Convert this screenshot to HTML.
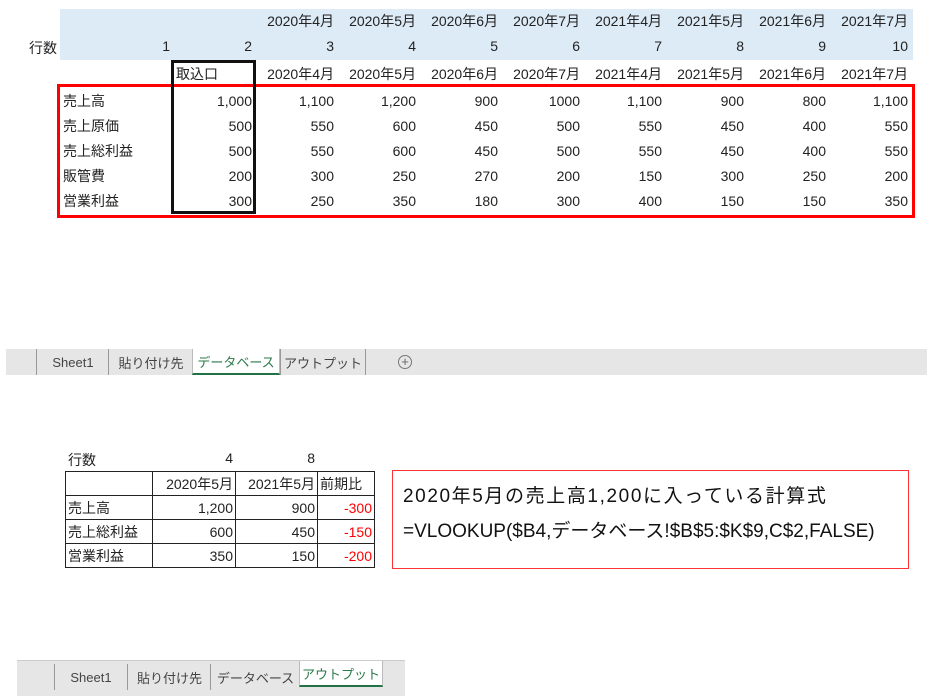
<!DOCTYPE html>
<html><head><meta charset="utf-8"><style>
body{margin:0;width:937px;height:695px;background:#fff;position:relative;overflow:hidden;font-family:"Liberation Sans","Noto Sans CJK JP",sans-serif;color:#222}
.a{position:absolute}
table{border-collapse:collapse;position:absolute;font-size:14px;table-layout:fixed}
#t1 td{height:25px;padding:0 2px 0 0;text-align:right;width:80px;white-space:nowrap;line-height:25px;overflow:visible}
#t1 td.l{text-align:left;padding-left:5px;width:107px}
#t2 td{border:1.5px solid #222;height:23px;padding:0 2px;text-align:right;white-space:nowrap;font-size:14px}
#t2 td.l{text-align:left}
.r{color:#f00}
.bar{position:absolute;background:#e6e6e6;font-size:13px;color:#444}
.tab{position:absolute;top:0;height:100%;display:flex;align-items:center;justify-content:center;border-left:1px solid #999;white-space:nowrap}
.act{background:#fff;color:#2a7a4a;border-bottom:2px solid #217346;box-sizing:border-box;border-left:1px solid #bbb;border-right:1px solid #bbb}
</style></head><body>
<div class="a" style="left:60px;top:9px;width:853px;height:51px;background:#ddebf7"></div>
<div class="a" style="left:29px;top:38px;font-size:14px">行数</div>
<table id="t1" style="left:58px;top:9px;width:852px">
<colgroup><col style="width:114px"><col span="9" style="width:82px"></colgroup>
<tr><td class="l"></td><td></td><td>2020年4月</td><td>2020年5月</td><td>2020年6月</td><td>2020年7月</td><td>2021年4月</td><td>2021年5月</td><td>2021年6月</td><td>2021年7月</td></tr>
<tr><td class="l" style="text-align:right;padding-right:2px">1</td><td>2</td><td>3</td><td>4</td><td>5</td><td>6</td><td>7</td><td>8</td><td>9</td><td>10</td></tr>
<tr style="height:28px"><td class="l" style="height:28px;line-height:30px"></td><td style="text-align:left;padding-left:4px;height:28px;line-height:30px">取込口</td><td style="height:28px;line-height:30px">2020年4月</td><td style="line-height:30px">2020年5月</td><td style="line-height:30px">2020年6月</td><td style="line-height:30px">2020年7月</td><td style="line-height:30px">2021年4月</td><td style="line-height:30px">2021年5月</td><td style="line-height:30px">2021年6月</td><td style="line-height:30px">2021年7月</td></tr>
<tr><td class="l">売上高</td><td>1,000</td><td>1,100</td><td>1,200</td><td>900</td><td>1000</td><td>1,100</td><td>900</td><td>800</td><td>1,100</td></tr>
<tr><td class="l">売上原価</td><td>500</td><td>550</td><td>600</td><td>450</td><td>500</td><td>550</td><td>450</td><td>400</td><td>550</td></tr>
<tr><td class="l">売上総利益</td><td>500</td><td>550</td><td>600</td><td>450</td><td>500</td><td>550</td><td>450</td><td>400</td><td>550</td></tr>
<tr><td class="l">販管費</td><td>200</td><td>300</td><td>250</td><td>270</td><td>200</td><td>150</td><td>300</td><td>250</td><td>200</td></tr>
<tr><td class="l">営業利益</td><td>300</td><td>250</td><td>350</td><td>180</td><td>300</td><td>400</td><td>150</td><td>150</td><td>350</td></tr>
</table>
<div class="a" style="left:57px;top:84px;width:852px;height:128px;border:3px solid #f00"></div>
<div class="a" style="left:171px;top:60px;width:79px;height:148px;border:3px solid #111"></div>

<div class="bar" style="left:6px;top:349px;width:921px;height:26px">
<div class="tab" style="left:30px;width:72px">Sheet1</div>
<div class="tab" style="left:102px;width:84px">貼り付け先</div>
<div class="tab act" style="left:186px;width:88px">データベース</div>
<div class="tab" style="left:274px;width:84px;border-right:1px solid #999">アウトプット</div>
<div class="a" style="left:392px;top:6px;width:12px;height:12px;border:1px solid #777;border-radius:50%;text-align:center;line-height:12px;font-size:13px;color:#666">+</div>
</div>

<div class="a" style="left:68px;top:450px;font-size:14px">行数</div>
<div class="a" style="left:200px;top:450px;width:33px;text-align:right;font-size:14px">4</div>
<div class="a" style="left:280px;top:450px;width:35px;text-align:right;font-size:14px">8</div>
<table id="t2" style="left:65px;top:471px">
<tr><td class="l" style="width:82px"></td><td style="width:78px">2020年5月</td><td style="width:77px">2021年5月</td><td class="l" style="width:52px">前期比</td></tr>
<tr><td class="l">売上高</td><td>1,200</td><td>900</td><td class="r">-300</td></tr>
<tr><td class="l">売上総利益</td><td>600</td><td>450</td><td class="r">-150</td></tr>
<tr><td class="l">営業利益</td><td>350</td><td>150</td><td class="r">-200</td></tr>
</table>
<div class="a" style="left:392px;top:470px;width:515px;height:97px;border:1px solid #f33"></div>
<div class="a" style="left:403px;top:481px;font-size:19px;color:#111;white-space:nowrap;letter-spacing:1.6px">2020年5月の売上高1,200に入っている計算式</div>
<div class="a" style="left:403px;top:516px;font-size:19px;color:#111;white-space:nowrap">=VLOOKUP($B4,データベース!$B$5:$K$9,C$2,FALSE)</div>

<div class="bar" style="left:17px;top:660px;width:388px;height:35px;border-top:1px solid #ccc">
<div class="tab" style="left:37px;top:3px;height:26px;width:72px">Sheet1</div>
<div class="tab" style="left:110px;top:3px;height:26px;width:83px">貼り付け先</div>
<div class="tab" style="left:193px;top:3px;height:26px;width:89px">データベース</div>
<div class="tab act" style="left:282px;top:0;height:26px;width:84px">アウトプット</div>
</div>
</body></html>
